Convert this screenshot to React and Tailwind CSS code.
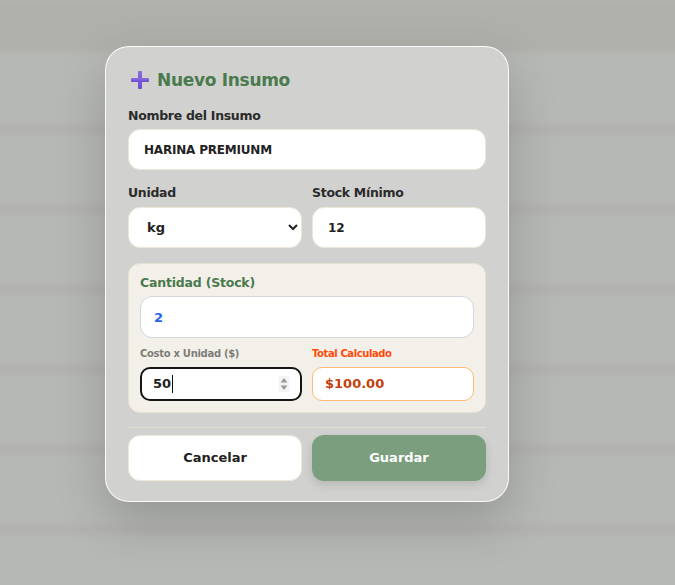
import React from 'react';

const font = { fontFamily: '"DejaVu Sans", "Noto Sans", sans-serif' };

const PlusIcon = () => (
  <svg width="20" height="20" viewBox="0 0 20 20">
    <defs>
      <linearGradient id="pg" x1="0" y1="0" x2="0" y2="1">
        <stop offset="0" stopColor="#8b6ee0" />
        <stop offset="1" stopColor="#6a4bcf" />
      </linearGradient>
    </defs>
    <rect x="8" y="1" width="4" height="18" rx="1" fill="url(#pg)" />
    <rect x="1" y="8" width="18" height="4" rx="1" fill="url(#pg)" />
  </svg>
);

const App = () => {
  const rows = [0, 1, 2, 3, 4, 5, 6];

  return (
    <div className="relative w-[675px] h-[585px] overflow-hidden bg-[#b6b8b5]" style={font}>
      {/* blurred page behind the modal */}
      <div className="blur-[3px] -mx-4">
        <div className="h-[52px] bg-[#afb0aa]" />
        {rows.map((r) => (
          <div key={r} className="h-[80px] flex flex-col justify-end">
            <div className="h-[5px] bg-[#aeafa9]" />
          </div>
        ))}
      </div>

      {/* modal */}
      <div className="absolute left-[105px] top-[46px] w-[404px] rounded-[24px] border border-white/90 bg-[#d1d2cf] px-[22px] pt-[23px] pb-[20px] shadow-[0_20px_50px_rgba(0,0,0,0.18)]">
        <div className="flex items-center gap-[7px] pl-[2px] h-[20px]">
          <PlusIcon />
          <h2 className="text-[17px] leading-[20px] font-bold text-[#4a7a4e] tracking-[-0.3px]">Nuevo Insumo</h2>
        </div>

        <label className="block mt-[18px] text-[12.5px] leading-[16px] font-bold text-[#2b2b2b] tracking-[-0.3px]">Nombre del Insumo</label>
        <input
          type="text"
          defaultValue="HARINA PREMIUNM"
          className="block mt-[5px] w-full h-[41px] rounded-xl border border-[#ebe6d8] bg-white px-[15px] text-[12px] font-bold text-[#222] tracking-[-0.2px] outline-none"
        />

        <div className="grid grid-cols-2 gap-[10px] mt-[15px]">
          <div>
            <label className="block text-[12.5px] leading-[16px] font-bold text-[#2b2b2b] tracking-[-0.3px]">Unidad</label>
            <select
              defaultValue="kg"
              className="block mt-[6px] w-full h-[41px] rounded-xl border border-[#ebe6d8] bg-white pl-[14px] pr-[6px] text-[13px] font-bold text-[#222] outline-none"
            >
              <option value="kg">kg</option>
              <option value="g">g</option>
              <option value="l">l</option>
            </select>
          </div>
          <div>
            <label className="block text-[12.5px] leading-[16px] font-bold text-[#2b2b2b] tracking-[-0.3px]">Stock Mínimo</label>
            <input
              type="text"
              defaultValue="12"
              className="block mt-[6px] w-full h-[41px] rounded-xl border border-[#ebe6d8] bg-white px-[15px] text-[12px] font-bold text-[#222] outline-none"
            />
          </div>
        </div>

        <div className="mt-[15px] rounded-xl border border-[#e6e1d5] bg-[#f3f0e9] px-[11px] pt-[11px] pb-[11px]">
          <label className="block text-[12.5px] leading-[16px] font-bold text-[#4a7a4e] tracking-[-0.2px]">Cantidad (Stock)</label>
          <input
            type="text"
            defaultValue="2"
            className="block mt-[5px] w-full h-[42px] rounded-xl border border-[#d3d6dc] bg-white px-[13px] text-[13px] font-bold text-[#2563eb] outline-none"
          />
          <div className="grid grid-cols-2 gap-[10px] mt-[9px]">
            <div>
              <label className="block text-[10px] leading-[14px] font-bold text-[#7d7d7a] tracking-[-0.3px]">Costo x Unidad ($)</label>
              <div className="relative mt-[6px] h-[34px] rounded-[10px] border-2 border-[#151515] bg-white flex items-center pl-[11px]">
                <span className="text-[13px] font-bold text-[#222]">50</span>
                <span className="ml-[1px] w-px h-[18px] bg-[#111]" />
                <svg className="absolute right-[11px] top-[7px]" width="10" height="16" viewBox="0 0 10 16">
                  <rect x="0" y="0" width="10" height="16" fill="#f3f3f3" />
                  <path d="M1.5 6.5 L5 2 L8.5 6.5 Z" fill="#9a9a9a" />
                  <path d="M1.5 9.5 L5 14 L8.5 9.5 Z" fill="#9a9a9a" />
                </svg>
              </div>
            </div>
            <div>
              <label className="block text-[10px] leading-[14px] font-bold text-[#ff4a0a] tracking-[-0.4px]">Total Calculado</label>
              <div className="mt-[6px] h-[34px] rounded-[10px] border border-[#fdba74] bg-white flex items-center px-[12px]">
                <span className="text-[13px] font-bold text-[#c2410c]">$100.00</span>
              </div>
            </div>
          </div>
        </div>

        <div className="mt-[14px] border-t border-[#e4e0d3] pt-[7px] grid grid-cols-2 gap-[10px]">
          <button className="h-[46px] rounded-xl border border-[#ede8da] bg-white text-[13px] font-bold text-[#222]">
            Cancelar
          </button>
          <button className="h-[46px] rounded-xl bg-[#7a9e7e] text-[13px] font-bold text-white shadow-[0_4px_10px_rgba(0,0,0,0.12)]">
            Guardar
          </button>
        </div>
      </div>
    </div>
  );
};

export default App;
